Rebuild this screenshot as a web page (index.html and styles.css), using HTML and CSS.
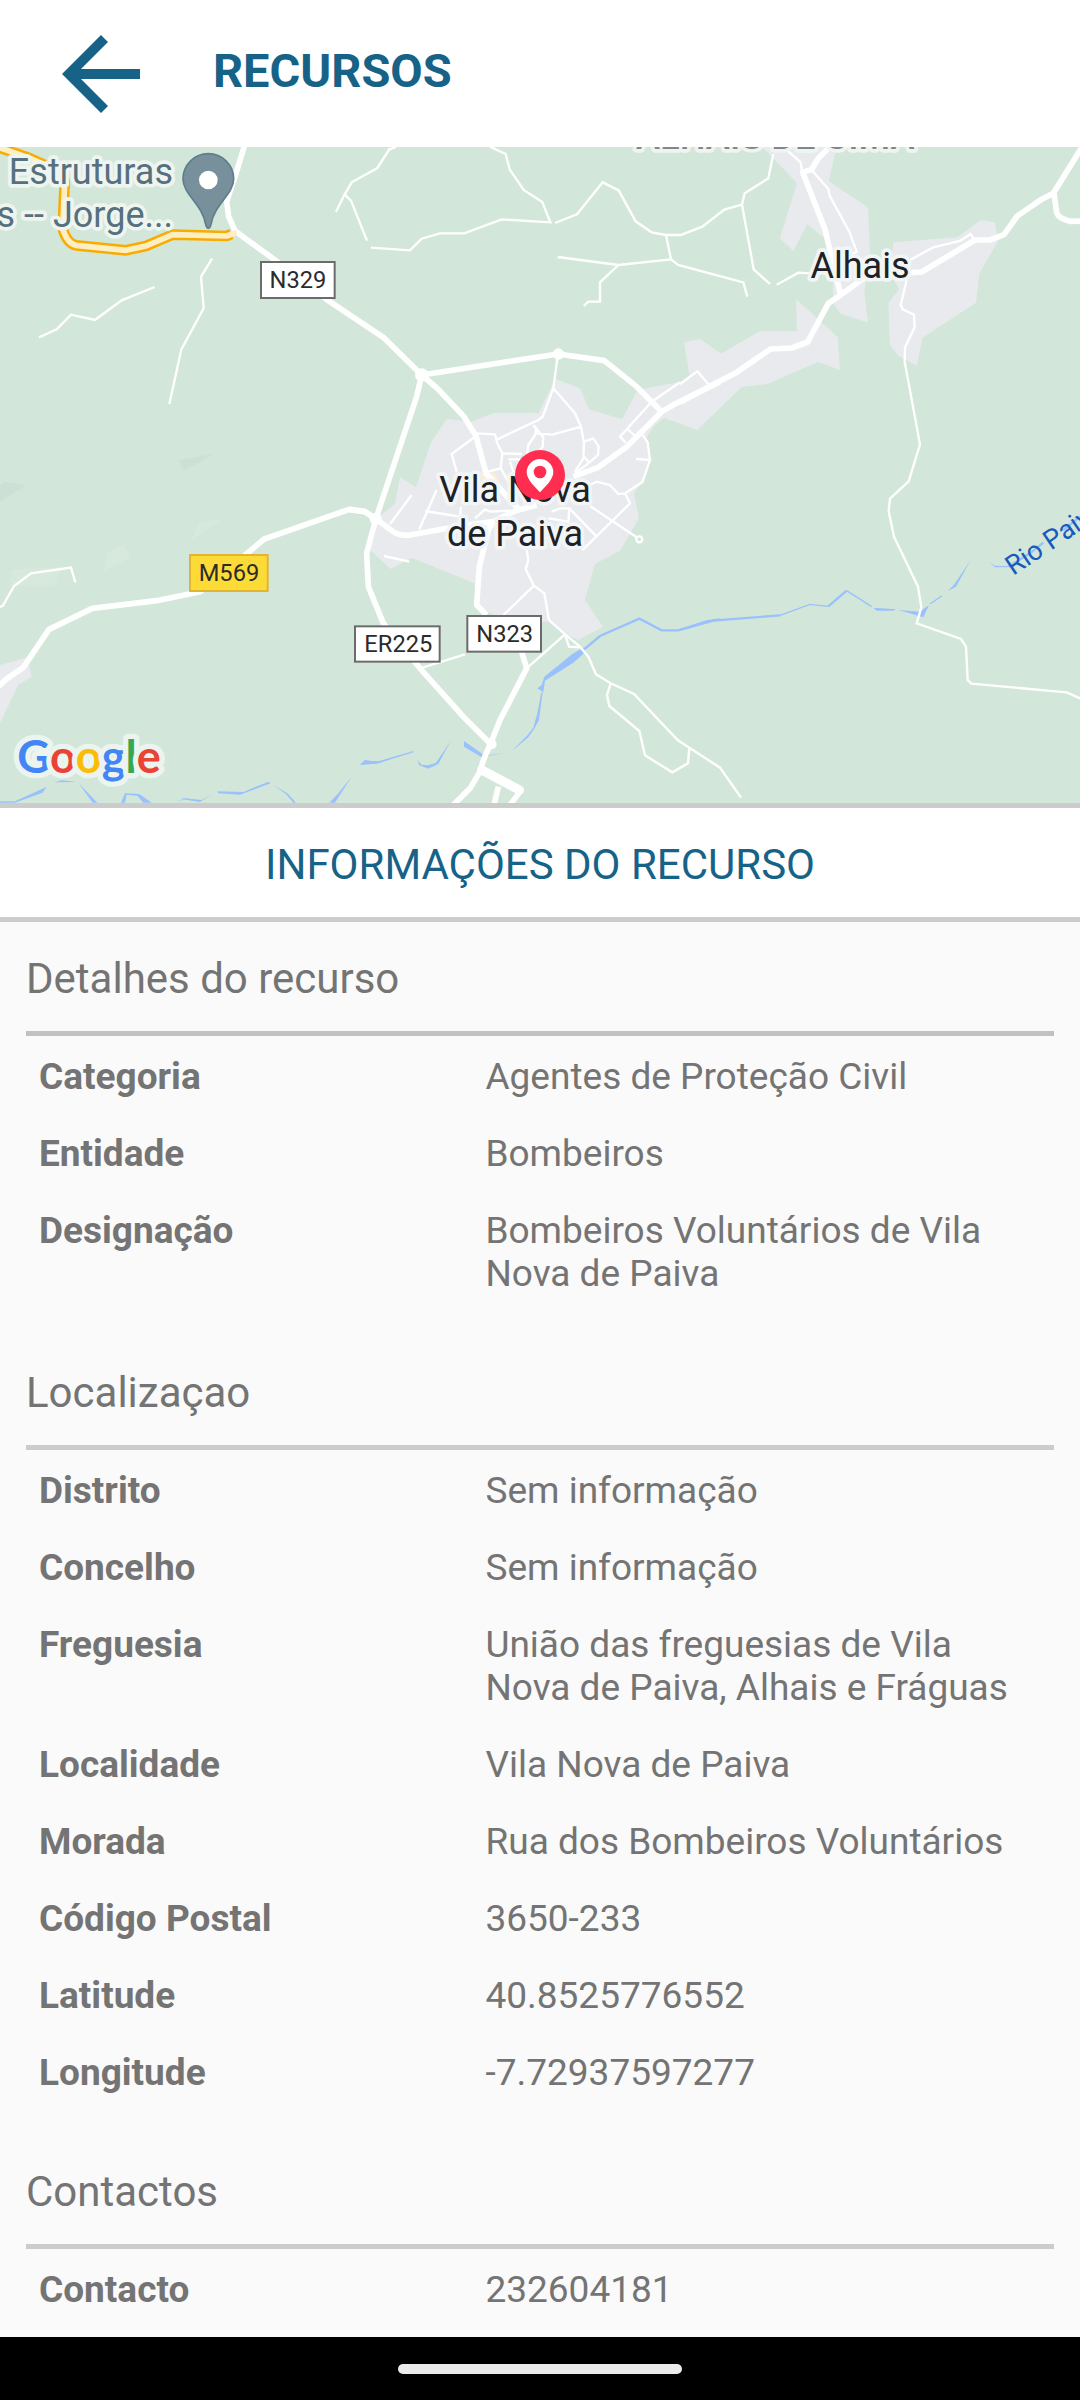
FILE: index.html
```html
<!DOCTYPE html>
<html lang="pt">
<head>
<meta charset="utf-8">
<meta name="viewport" content="width=device-width, initial-scale=1">
<title>Recursos</title>
<link rel="stylesheet" href="styles.css">
</head>
<body>
<div class="app">
<header class="topbar">
  <button class="back" type="button" aria-label="Voltar">
    <svg class="back-icon" viewBox="0 0 78 78" aria-hidden="true"><path d="M39 0l7 7-27 27h59v10H19l27 27-7 7L0 39z"/></svg>
  </button>
  <h1 class="title">RECURSOS</h1>
</header>
<main class="content">
<svg class="map" viewBox="0 441 3240 1968" role="img" aria-label="Mapa de Vila Nova de Paiva">
  <rect class="land" y="441" width="3240" height="1968"/>
  <!-- relief -->
  <g class="shade">
    <path d="M537 1380L640 1362 552 1412z"/>
    <path d="M0 1455L15 1445 78 1456 0 1505z"/>
  </g>
  <g class="shade-light" transform="translate(0 1410)">
    <path d="M568 218L598 160 668 145zM310 305L322 248 370 225 392 262zM35 300L185 290 168 348 30 348z"/>
  </g>
  <!-- built-up areas -->
  <g class="urban">
    <path transform="translate(1080 900)" d="M260 357L335 365 400 339 537 338 585 236 660 265 687 328 786 358 833 270 970 244 988 225 972 127 1020 117 1083 161 1200 93 1311 93 1308 -3 1433 111 1440 210 1374 186 1220 253 1145 261 1012 390 912 353 880 380 860 412 870 480 848 545 822 580 837 655 780 752 704 792 686 860 674 899 729 980 655 1020 610 1000 565 965 440 968 350 915 343 850 155 773 92 807 30 750 45 660 105 612 120 532 168 562 212 430z"/>
    <path transform="translate(2040 420)" d="M245 21L470 21 446 124 564 202 570 345 553 455 564 548 482 521 459 490 459 380 435 296 381 253 340 333 300 295 351 130 280 55zM640 307L832 292 903 240 945 247 953 305 898 400 888 488 728 593 710 677 655 647 630 615 625 490 657 447 630 400z"/>
    <path transform="translate(0 1410)" d="M0 585L82 562 95 620 55 645 0 760z"/>
  </g>
  <path class="plaza" transform="translate(1080 900)" d="M360 520L402 517 425 560 375 572z"/>
  <!-- river -->
  <g class="water">
    <g transform="translate(1080 1680)">
      <path d="M670 262L636 283 553 350 545 375 532 385 550 397 555 362 640 308 672 280zM548 397L537 480 522 508 505 532 455 574 500 528 520 503 532 460 544 397zM312 543L312 560 365 592 437 578 375 587zM272 543L235 612 205 626 178 616 172 600 185 614 205 616 228 608zM160 573L160 577 55 610 0 614 15 602 55 604z"/>
      <path class="stream" d="M1080 178L1040 184 955 211 905 211 838 176 720 228 670 270"/>
    </g>
    <g transform="translate(2040 1410)">
      <path d="M655 420L715 437 730 442 747 405 720 425zM580 413L648 418 640 422 590 422zM803 364L822 344 872 270 828 350zM927 276L945 287 985 288 985 292 945 292z"/>
      <path class="stream" d="M0 480L100 452 300 436"/>
      <path class="brook" d="M300 436L390 403 445 409M500 362L575 410M750 402L785 378"/>
      <path class="stream" d="M445 409L500 362M985 290L1050 250 1090 218M1150 180L1200 140"/>
    </g>
    <path transform="translate(0 1410)" d="M0 994L45 994 140 950 128 968 45 998 0 998zM165 937L185 931 230 936zM235 938L292 998 278 998zM363 998L375 970 418 972 455 998 430 998 412 977 380 974 375 998zM535 998L548 984 605 990 640 970 600 996 548 988zM652 964L730 966 805 935 812 940 720 974 655 970zM820 945L862 970 888 998 880 998 858 972zM988 998L1015 970 1055 920 1005 998zM1080 884L1095 870 1135 876 1200 856 1130 881z"/>
  </g>
  <!-- small roads -->
  <g class="lane">
    <path transform="translate(0 420)" d="M117 592L170 568 213 524 285 540 365 481 464 441M636 356L603 410 611 505 544 628 508 792M1188 21L1168 28 1132 84 1055 127 1034 163 1008 215M1034 163L1053 182 1101 302"/>
    <path transform="translate(1080 420)" d="M390 20L437 42 449 88 491 150 547 186 571 247 425 238 313 280 240 280 185 296 150 331 33 323M585 249L651 223 728 127 776 151 827 244 875 277 918 285 962 285 1027 260 1093 209 1146 194 1154 160 1225 115 1240 42M1146 194L1181 388 1230 432M918 285L933 358 954 375 1150 427 1162 470M593 351L775 375 933 358M775 375L720 427 720 485 685 485 671 498"/>
    <path transform="translate(2040 420)" d="M290 434L355 398 390 400M315 25L362 67 366 95M395 90L445 147 450 170 508 275 530 335 510 345M690 360L760 322 840 303 872 282 882 298M0 732L52 694 88 736M680 420L662 495 668 508 702 524 704 562 675 622 674 665 720 913 686 1024 630 1076 626 1114 642 1190 714 1340 724 1402 710 1450 843 1497 858 1520 863 1620 874 1631 1160 1657 1200 1675"/>
    <path transform="translate(1080 900)" d="M592 175L580 265 548 350 535 360 412 418M580 265L645 340 663 380 672 430 670 475 645 515M663 380L577 404 525 400M520 375L550 412 548 440 530 460M530 380L525 405 505 435 500 470M348 400L405 403 412 430 427 460 485 462M348 408L275 462 290 515M427 460L422 505 445 545M422 505L385 515M445 478L480 478M450 485L462 520M672 425L700 415 716 440 714 465 688 488 672 470M688 488L645 520M875 305L780 410 797 428M800 385L825 408M875 305L960 247M848 405L863 427 870 480 848 545 795 580 775 582 750 555 710 545 690 555M870 480L828 477M795 580L810 610 670 748 630 700M690 618L830 712M628 625L710 710M575 635L600 625 628 625 625 665 565 655M195 633L300 650 303 620M230 570L178 688M155 585L90 672M72 768L148 785M345 655L375 628 390 635 450 632M500 750L505 780 497 808 522 857 553 880 567 960 615 1003 660 1040 685 1070 708 1123 752 1150 822 1182 953 1320 988 1343 1080 1403 1143 1493M522 857L430 945M615 1003L500 1105M615 1003L627 1040 660 1042M752 1150L741 1185 748 1218 838 1293 855 1366 937 1417 984 1390 988 1343M180 1105L315 1063"/>
    <circle cx="1918" cy="1618" r="9"/>
    <path transform="translate(0 1410)" d="M-5 412L8 408 42 348 93 310 213 293 226 337"/>
  </g>
  <!-- trunk road -->
  <path class="trunk-edge" transform="translate(0 420)" d="M-9 20L90 55 150 82Q194 95 194 130L188 265Q200 310 228 316L378 331 438 318 518 284 680 288 694 282"/>
  <!-- main roads -->
  <g class="road">
    <path transform="translate(0 420)" d="M734 15L705 110 680 185 686 230 705 272 742 300 825 360 985 482 1150 592 1265 705"/>
    <path transform="translate(1080 900)" d="M185 225L170 290 48 655 20 760 25 860 70 970 180 1105 310 1250 390 1330M185 225L595 162 733 182 830 260 905 335M185 225L232 265 312 350 348 408 378 520 455 605 475 625M-32 628L15 635 45 655 100 695Q115 708 150 705L300 678 400 665 465 633 530 615M640 530L715 502 800 440 905 335 945 312 1080 245M400 665L385 690 358 800 350 915 380 945M485 1055L500 1105 420 1260 390 1335 370 1380 360 1415 330 1465 280 1515M415 1460L402 1515M480 1475L450 1515"/>
    <path class="road-wide" transform="translate(1080 1680)" d="M365 630L478 690"/>
    <path transform="translate(2040 420)" d="M110 728L165 700 272 627 335 624 383 606 445 490 482 465 560 408M445 25L415 55 395 88 368 97 435 268 482 465M690 398L725 396 885 300 930 300 972 284 1012 228 1080 181 1120 160 1210 15M1122 160L1130 218Q1135 235 1170 244L1210 243"/>
    <path transform="translate(0 1410)" d="M-6 650L18 628 70 592 147 478 277 415 470 392 600 365 700 285 793 207 1048 118 1095 125 1130 150"/>
    <path transform="translate(2040 420)" d="M0 787L112 727"/>
  </g>
  <g class="junction">
    <circle cx="1265" cy="1125" r="20"/><circle cx="1675" cy="1062" r="17"/><circle cx="1127" cy="1556" r="18"/><circle cx="1475" cy="2233" r="15"/>
  </g>
  <path class="trunk" transform="translate(0 420)" d="M-9 20L90 55 150 82Q194 95 194 130L188 265Q200 310 228 316L378 331 438 318 518 284 680 288 710 277"/>
  <!-- place names -->
  <g class="poi">
    <text x="519" y="551" text-anchor="end">Estruturas</text>
    <text x="519" y="681" text-anchor="end">s -- Jorge...</text>
  </g>
  <g transform="translate(625 537)">
    <path class="poi-pin" d="M0 148C-5 148-6 144-8 136C-18 76-76 46-76 0A76 76 0 0 1 76 0C76 46 18 76 8 136C6 144 5 148 0 148z"/>
    <circle class="dot" cy="3" r="28"/>
  </g>
  <text class="district" x="2326" y="446" text-anchor="middle">ALHAIS DE CIMA</text>
  <g class="place">
    <text x="2580" y="833" text-anchor="middle">Alhais</text>
    <text x="1545" y="1507" text-anchor="middle">Vila Nova</text>
    <text x="1545" y="1637" text-anchor="middle">de Paiva</text>
  </g>
  <text class="river-name" transform="translate(3040 1728) rotate(-34)">Rio Paiva</text>
  <!-- road shields -->
  <g class="shield">
    <rect x="783" y="786" width="221" height="108"/><text x="894" y="863">N329</text>
    <rect x="1065" y="1879" width="254" height="106"/><text x="1195" y="1955">ER225</text>
    <rect x="1402" y="1848" width="221" height="107"/><text x="1514" y="1925">N323</text>
    <rect class="shield-local" x="570" y="1665" width="233" height="108"/><text x="687" y="1742">M569</text>
  </g>
  <g transform="translate(1620 1425)">
    <circle class="marker" r="75"/>
    <path class="dot" d="M0 52C-7 44-40 16-40-8A40 40 0 0 1 40-8C40 16 7 44 0 52z"/>
    <circle class="marker" cy="-9" r="19"/>
  </g>
  <text class="brand" x="52" y="2319"><tspan class="g-blue">G</tspan><tspan class="g-red">o</tspan><tspan class="g-yellow">o</tspan><tspan class="g-blue">g</tspan><tspan class="g-green">l</tspan><tspan class="g-red">e</tspan></text>
</svg>
<h2 class="banner">INFORMAÇÕES DO RECURSO</h2>
<section class="group">
  <h3 class="group-title">Detalhes do recurso</h3>
  <dl class="fields">
    <div class="field"><dt>Categoria</dt><dd>Agentes de Proteção Civil</dd></div>
    <div class="field"><dt>Entidade</dt><dd>Bombeiros</dd></div>
    <div class="field"><dt>Designação</dt><dd>Bombeiros Voluntários de Vila Nova de Paiva</dd></div>
  </dl>
</section>
<section class="group">
  <h3 class="group-title">Localizaçao</h3>
  <dl class="fields">
    <div class="field"><dt>Distrito</dt><dd>Sem informação</dd></div>
    <div class="field"><dt>Concelho</dt><dd>Sem informação</dd></div>
    <div class="field"><dt>Freguesia</dt><dd>União das freguesias de Vila Nova de Paiva, Alhais e Fráguas</dd></div>
    <div class="field"><dt>Localidade</dt><dd>Vila Nova de Paiva</dd></div>
    <div class="field"><dt>Morada</dt><dd>Rua dos Bombeiros Voluntários</dd></div>
    <div class="field"><dt>Código Postal</dt><dd>3650-233</dd></div>
    <div class="field"><dt>Latitude</dt><dd>40.8525776552</dd></div>
    <div class="field"><dt>Longitude</dt><dd>-7.72937597277</dd></div>
  </dl>
</section>
<section class="group">
  <h3 class="group-title">Contactos</h3>
  <dl class="fields">
    <div class="field"><dt>Contacto</dt><dd>232604181</dd></div>
  </dl>
</section>
</main>
<footer class="navbar"><span class="home-pill"></span></footer>
</div>
</body>
</html>
```
FILE: styles.css
```css
* { box-sizing: border-box; margin: 0; padding: 0; }

body {
  font-family: Roboto, "Liberation Sans", sans-serif;
  background: #fafafa;
  color: #747474;
}

.app { display: flex; flex-direction: column; min-height: 100vh; }

.topbar {
  display: flex;
  align-items: center;
  gap: 73px;
  height: 147px;
  padding: 0 62px;
  background: #fff;
  color: #176388;
}
.back { display: flex; border: 0; background: none; color: inherit; cursor: pointer; }
.back-icon { width: 78px; height: 78px; fill: currentColor; }
.title { font-size: 47px; line-height: 56px; font-weight: 700; padding-bottom: 6px; }

.content { flex: 1; }

.banner {
  padding: 32px 16px 28px;
  border-top: 5px solid #ccc;
  border-bottom: 5px solid #ccc;
  background: #fff;
  color: #176388;
  font-size: 42px;
  line-height: 49px;
  font-weight: 400;
  text-align: center;
}

.group { padding: 0 26px; }
.group-title {
  padding: 32px 0 28px;
  border-bottom: 5px solid #ccc;
  font-size: 42px;
  line-height: 49px;
  font-weight: 400;
}
.banner + .group .group-title { border-color: #c1c1c1; }
.fields { padding: 2px 13px 24px; }
.group:last-child .fields { padding-bottom: 9px; }
.field {
  display: grid;
  grid-template-columns: 4fr 5fr;
  column-gap: 2px;
  padding: 17px 0;
  font-size: 37px;
  line-height: 43px;
}
.field dt { font-weight: 700; }

.navbar {
  display: flex;
  justify-content: center;
  align-items: center;
  height: 63px;
  background: #000;
}
.home-pill { width: 284px; height: 10px; border-radius: 5px; background: #ebebeb; }

/* map */
.map { display: block; width: 100%; height: auto; }
.land { fill: #d2e7da; }
.shade { fill: #cce0d5; }
.shade-light { fill: #d6e9dc; }
.urban { fill: #e8eaee; }
.plaza { fill: #fdf0d2; }
.water { fill: #9bc1fc; }
.stream { fill: none; stroke: #9bc1fc; stroke-width: 7; }
.brook { fill: none; stroke: #9bc1fc; stroke-width: 4; }
.lane { fill: none; stroke: #fff; stroke-width: 7; }
.road { fill: none; stroke: #fff; stroke-width: 17; stroke-linejoin: round; }
.road-wide { stroke-width: 28; stroke-linecap: round; }
.junction { fill: #fff; }
.trunk-edge { fill: none; stroke: #f9ab00; stroke-width: 32; stroke-linejoin: round; }
.trunk { fill: none; stroke: #feefc3; stroke-width: 17; stroke-linejoin: round; }
.poi { font-size: 108px; fill: #56707e; stroke: #eef5f1; stroke-width: 22; stroke-linejoin: round; paint-order: stroke; }
.poi-pin { fill: #78909c; stroke: #5f7d8c; stroke-width: 5; }
.dot { fill: #fff; }
.district { font-size: 109px; font-weight: 500; fill: #80868b; stroke: #eef5f1; stroke-width: 22; stroke-linejoin: round; paint-order: stroke; }
.place { font-size: 108px; fill: #202124; stroke: #f1f5f5; stroke-width: 22; stroke-linejoin: round; paint-order: stroke; }
.river-name { font-size: 81px; fill: #185abc; }
.shield rect { fill: #fff; stroke: #6c6c6c; stroke-width: 6; }
.shield .shield-local { fill: #fddb36; stroke: #e2b431; }
.shield text { font-size: 71px; fill: #2b2b2b; text-anchor: middle; }
.marker { fill: #ff2d50; }
.brand { font-family: Lato, Roboto, sans-serif; font-weight: 700; font-size: 135px; stroke: #ebf4ef; stroke-width: 32; stroke-linejoin: round; paint-order: stroke; }
.g-blue { fill: #4285f4; }
.g-red { fill: #ea4335; }
.g-yellow { fill: #fbbc05; }
.g-green { fill: #34a853; }
```
